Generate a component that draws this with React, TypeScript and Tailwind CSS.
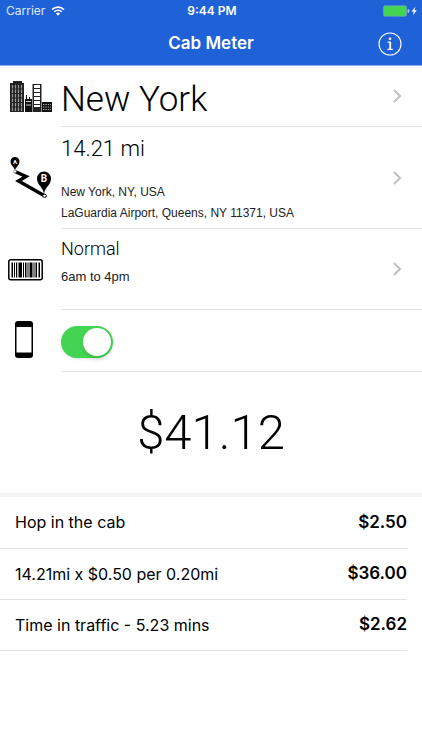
import { useState } from "react";
import type { ReactNode } from "react";

function CityIcon() {
  return (
    <svg width="42" height="32" viewBox="0 0 42 32" aria-hidden="true">
      <path d="M3 0h9v2h2v29H0V2h3z" fill="#222" />
      <path
        d="M2.5 4v26M5.5 4v26M8.5 4v26M11.5 4v26"
        stroke="#999"
        strokeWidth="1.2"
      />
      <path
        d="M0 3.5h14M0 8h14M0 12.5h14M0 17h14M0 21.5h14M0 26h14"
        stroke="#222"
        strokeWidth="1"
      />
      <path d="M16 14h1v4h2v-2h1v2h2v13h-7V18h1z" fill="#111" />
      <path d="M16 20.5h5M16 24h5" stroke="#ccc" strokeWidth="1" />
      <path d="M22.500 3h9v28h-9z" fill="#222" />
      <path
        d="M24 4h6v3h-6zM24 8h6v3h-6zM24 12h6v3h-6zM24 16h6v3h-6zM24 20h6v3h-6zM24 24h6v2h-6z"
        fill="#fff"
      />
      <path d="M32 21h10v10H32z" fill="#111" />
      <path
        d="M33 23.5h8M33 26h8M33 28.5h8"
        stroke="#aaa"
        strokeWidth="1"
        strokeDasharray="1.4 1"
      />
    </svg>
  );
}

function RouteIcon() {
  return (
    <svg width="44" height="42" viewBox="0 0 44 42" aria-hidden="true">
      <path
        d="M7 14.500 18 19.500 10.500 24 36 38.500"
        fill="none"
        stroke="#000"
        strokeWidth="3.4"
      />
      <circle cx="7" cy="14.5" r="1.4" fill="#fff" stroke="#777" strokeWidth=".7" />
      <path d="M7 13C6 10 2.500 8 2.500 4.500a4.500 4.500 0 0 1 9 0C11.500 8 8 10 7 13z" />
      <ellipse cx="36.500" cy="38.800" rx="2" ry="1.500" fill="#fff" stroke="#000" />
      <path d="M36 37C35 30 29 28 29 21.500a7 7 0 0 1 14 0C43 28 37 30 36 37z" />
      <text
        x="7"
        y="7"
        fill="#fff"
        fontSize="6"
        fontWeight="700"
        textAnchor="middle"
      >
        A
      </text>
      <text
        x="36"
        y="25"
        fill="#fff"
        fontSize="10"
        fontWeight="700"
        textAnchor="middle"
      >
        B
      </text>
    </svg>
  );
}

function BarcodeIcon() {
  return (
    <svg width="35" height="22" viewBox="0 0 35 22" aria-hidden="true">
      <rect
        x=".8"
        y=".8"
        width="33.400"
        height="20"
        rx="2"
        fill="#fff"
        stroke="#000"
        strokeWidth="1.500"
      />
      <path d="M3.500 3.500h1.500v15h-1.500zM6 3.500h1v15h-1zM8 3.500h1.200v15h-1.200zM10.500 3.500h3.500v15h-3.500zM15 3.500h1v15h-1zM17 3.500h1.500v15h-1.500zM19.500 3.500h1v15h-1zM21.500 3.500h3v15h-3zM25.500 3.500h1v15h-1zM27.500 3.500h1.500v15h-1.500zM30.500 3.500h1.500v15h-1.500z" />
    </svg>
  );
}

function PhoneIcon() {
  return (
    <svg width="18" height="37" viewBox="0 0 18 37" aria-hidden="true">
      <rect width="18" height="37" rx="3" />
      <rect x="1.500" y="6" width="15" height="25.500" fill="#fff" />
    </svg>
  );
}

function Chevron() {
  return (
    <svg width="10" height="16" viewBox="0 0 10 16" aria-hidden="true">
      <path d="M2 2l6 6-6 6" fill="none" stroke="#c0c0c5" strokeWidth="2" />
    </svg>
  );
}

type RowProps = {
  icon: ReactNode;
  children: ReactNode;
};

function Row({ icon, children }: RowProps) {
  return (
    <button
      type="button"
      className="flex w-full text-left font-['Roboto','Liberation_Sans',sans-serif]"
    >
      <span className="flex w-[61px] shrink-0 items-center pl-2">{icon}</span>
      <span className="flex flex-1 items-center justify-between border-b border-[#e1e1e3] pr-5">
        {children}
        <Chevron />
      </span>
    </button>
  );
}

function StatusBar() {
  return (
    <div className="grid h-[22px] grid-cols-3 items-center pl-[6px] pr-1 text-xs">
      <div className="flex items-center gap-[6px] text-[#dfe9ff]">
        <span>Carrier</span>
        <svg width="14" height="10" viewBox="0 0 14 10" aria-hidden="true">
          <path
            d="M1 3.600a8.500 8.500 0 0 1 12 0M3.200 5.800a5.400 5.400 0 0 1 7.600 0"
            fill="none"
            stroke="#fff"
            strokeWidth="1.600"
          />
          <path d="M4.900 7.500a3 3 0 0 1 4.200 0L7 9.700z" fill="#fff" />
        </svg>
      </div>
      <div className="text-center font-semibold">9:44 PM</div>
      <div className="flex items-center justify-end">
        <svg width="35" height="12" viewBox="0 0 35 12" aria-hidden="true">
          <rect
            x=".5"
            y=".8"
            width="23"
            height="10.400"
            rx="1.500"
            fill="#43d551"
            stroke="#6fa5c8"
            strokeWidth=".7"
          />
          <path d="M24.500 4a2 2 0 0 1 0 4z" fill="#a5c5f5" />
          <path d="M32.500 1.500 28.500 6.500h2.300l-1 4 4-5.300h-2.400z" fill="#fff" />
        </svg>
      </div>
    </div>
  );
}

const fares = [
  { label: "Hop in the cab", amount: "$2.50" },
  { label: "14.21mi x $0.50 per 0.20mi", amount: "$36.00" },
  { label: "Time in traffic - 5.23 mins", amount: "$2.62" },
];

function App() {
  const [useDevice, setUseDevice] = useState(true);

  return (
    <div className="min-h-screen bg-white font-['Inter','Liberation_Sans',sans-serif] text-black">
      <header className="border-b border-[#8fb2ee] bg-[#1f61d7] text-white">
        <StatusBar />
        <div className="grid h-[43px] grid-cols-[1fr_auto_1fr] items-center px-5">
          <h1 className="col-start-2 text-[17px] font-semibold">Cab Meter</h1>
          <button type="button" aria-label="About" className="justify-self-end">
            <svg width="24" height="24" viewBox="0 0 24 24" fill="none">
              <circle cx="12" cy="12" r="11" stroke="#fff" strokeWidth="1.100" />
              <circle cx="12" cy="6.800" r="1.300" fill="#fff" />
              <path
                d="M9.700 10.200h2.500M9.500 17.300h5.200"
                stroke="#fff"
                strokeWidth="1.200"
              />
              <path d="M12.200 9.700v7.600" stroke="#fff" strokeWidth="1.800" />
            </svg>
          </button>
        </div>
      </header>

      <main>
        <Row
          icon={
            <span className="pl-[2px]">
              <CityIcon />
            </span>
          }
        >
          <span className="pt-2 text-[35px] leading-[52px] font-light">
            New York
          </span>
        </Row>
        <Row icon={<RouteIcon />}>
          <span className="flex flex-col pt-2 pb-1">
            <span className="mb-[19px] text-[22px] leading-7 font-light">
              14.21 mi
            </span>
            <span className="font-['Liberation_Sans',sans-serif] text-xs leading-[21px] text-[#222]">
              New York, NY, USA
            </span>
            <span className="font-['Liberation_Sans',sans-serif] text-xs leading-[21px] text-[#222]">
              LaGuardia Airport, Queens, NY 11371, USA
            </span>
          </span>
        </Row>
        <Row icon={<BarcodeIcon />}>
          <span className="flex flex-col pt-2 pb-5">
            <span className="mb-1 text-lg leading-6 font-light">Normal</span>
            <span className="font-['Liberation_Sans',sans-serif] text-[13px] leading-6 text-[#222]">
              6am to 4pm
            </span>
          </span>
        </Row>
        <div className="flex">
          <label
            htmlFor="device"
            className="flex w-[61px] shrink-0 items-center pb-1 pl-[15px]"
          >
            <PhoneIcon />
          </label>
          <div className="flex flex-1 border-b border-[#e1e1e3] pt-4 pb-[13px]">
            <input
              id="device"
              type="checkbox"
              role="switch"
              aria-label="Use this phone"
              checked={useDevice}
              onChange={(e) => setUseDevice(e.target.checked)}
              className="h-8 w-[52px] appearance-none rounded-full bg-gray-200 p-[2px] shadow-sm before:block before:size-7 before:rounded-full before:bg-white before:shadow-md checked:bg-[#43d551] checked:before:translate-x-5"
            />
          </div>
        </div>

        <p className="py-8 text-center font-['Roboto','Liberation_Sans',sans-serif] text-[49px] leading-[57px] font-light">
          $41.12
        </p>

        <section className="border-t-4 border-[#f4f4f4] pr-[15px]">
          <table className="w-full">
            <tbody>
              {fares.map((fare) => (
                <tr key={fare.label} className="h-[51px] border-b border-[#e1e1e3]">
                  <th scope="row" className="pl-[15px] text-left text-base font-normal">
                    {fare.label}
                  </th>
                  <td className="text-right text-[17px] font-semibold">
                    {fare.amount}
                  </td>
                </tr>
              ))}
            </tbody>
          </table>
        </section>
      </main>
    </div>
  );
}

export default App;
